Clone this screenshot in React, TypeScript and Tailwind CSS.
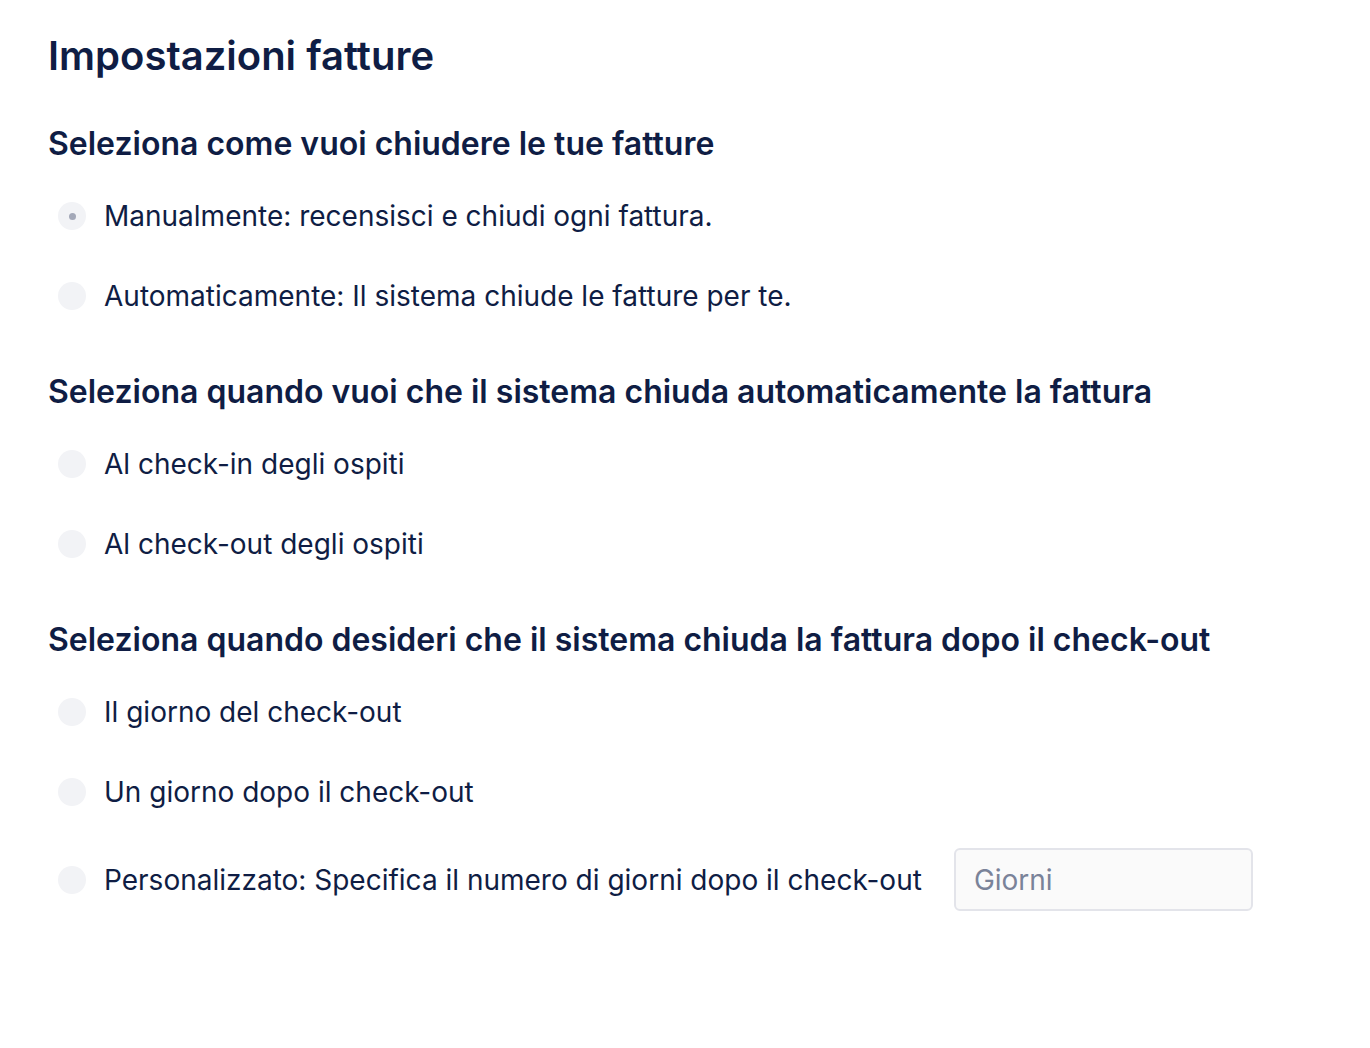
import { useState } from 'react';

type Option = { value: string; label: string };

const closeModes: Option[] = [
  { value: 'manual', label: 'Manualmente: recensisci e chiudi ogni fattura.' },
  { value: 'auto', label: 'Automaticamente: Il sistema chiude le fatture per te.' },
];

const autoMoments: Option[] = [
  { value: 'checkin', label: 'Al check-in degli ospiti' },
  { value: 'checkout', label: 'Al check-out degli ospiti' },
];

const afterCheckout: Option[] = [
  { value: 'same', label: 'Il giorno del check-out' },
  { value: 'next', label: 'Un giorno dopo il check-out' },
];

function Radio({ checked, onClick }: { checked: boolean; onClick(): void }) {
  return (
    <button
      type="button"
      onClick={onClick}
      className="ml-[10px] flex h-[28px] w-[28px] shrink-0 items-center justify-center rounded-full bg-[#f2f3f6]"
    >
      {checked && <span className="h-[7px] w-[7px] rounded-full bg-[#a3a8b8]" />}
    </button>
  );
}

function RadioRow({ option, selected, onSelect }: { option: Option; selected: string; onSelect(v: string): void }) {
  return (
    <label className="flex h-[40px] items-center gap-[18px]">
      <Radio checked={selected === option.value} onClick={() => onSelect(option.value)} />
      <span className="text-[28px] text-[#0f1d44]">{option.label}</span>
    </label>
  );
}

export default function App() {
  const [mode, setMode] = useState('manual');
  const [moment, setMoment] = useState('');
  const [after, setAfter] = useState('');
  const [days, setDays] = useState('');

  return (
    <div
      className="min-h-screen bg-white px-[48px] pt-[30px] text-[#0f1d44]"
      style={{ fontFamily: 'Inter, "Noto Sans", sans-serif' }}
    >
      <h1 className="text-[40px] font-semibold leading-[52px]">Impostazioni fatture</h1>

      <h2 className="mt-[42px] text-[32px] font-semibold leading-[40px]">Seleziona come vuoi chiudere le tue fatture</h2>
      <div className="mt-[32px] flex flex-col gap-[40px]">
        {closeModes.map((o) => (
          <RadioRow key={o.value} option={o} selected={mode} onSelect={setMode} />
        ))}
      </div>

      <h2 className="mt-[56px] text-[32px] font-semibold leading-[40px]">
        Seleziona quando vuoi che il sistema chiuda automaticamente la fattura
      </h2>
      <div className="mt-[32px] flex flex-col gap-[40px]">
        {autoMoments.map((o) => (
          <RadioRow key={o.value} option={o} selected={moment} onSelect={setMoment} />
        ))}
      </div>

      <h2 className="mt-[56px] text-[32px] font-semibold leading-[40px]">
        Seleziona quando desideri che il sistema chiuda la fattura dopo il check-out
      </h2>
      <div className="mt-[32px] flex flex-col gap-[40px]">
        {afterCheckout.map((o) => (
          <RadioRow key={o.value} option={o} selected={after} onSelect={setAfter} />
        ))}
        <div className="-mt-[4px] flex items-center">
          <label className="flex items-center gap-[18px]">
            <Radio checked={after === 'custom'} onClick={() => setAfter('custom')} />
            <span className="text-[28px] text-[#0f1d44]">
              Personalizzato: Specifica il numero di giorni dopo il check-out
            </span>
          </label>
          <input
            value={days}
            onChange={(e) => setDays(e.target.value)}
            placeholder="Giorni"
            className="ml-[32px] h-[63px] w-[299px] rounded-[6px] border-2 border-[#e3e4ea] bg-[#fafafa] px-[18px] text-[28px] text-[#0f1d44] outline-none placeholder:text-[#7a8399]"
          />
        </div>
      </div>
    </div>
  );
}
